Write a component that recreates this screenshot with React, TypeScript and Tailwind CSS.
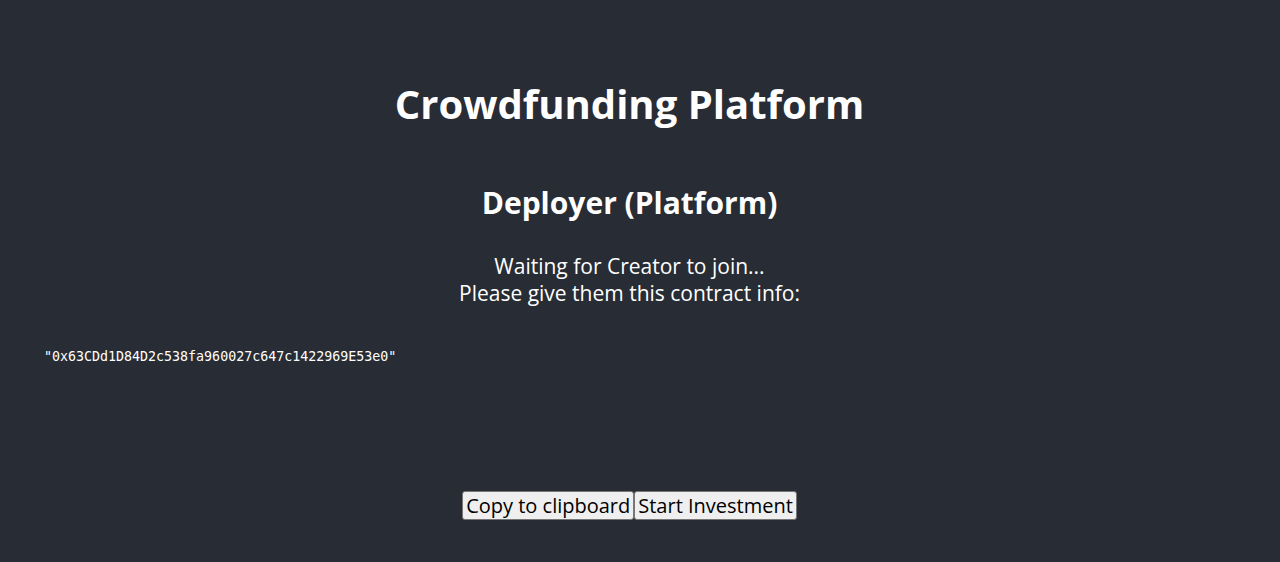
import React from "react";

const address = "0x63CDd1D84D2c538fa960027c647c1422969E53e0";

export default function App() {
  return (
    <div className="min-h-[562px] bg-[#282c34] text-white font-['Open_Sans',sans-serif] flex flex-col pr-[21px]">
      {/* Header */}
      <h1 className="text-center text-[40px] font-bold leading-none mt-[84px]">
        Crowdfunding Platform
      </h1>

      <h2 className="text-center text-[30px] font-bold leading-none mt-[64px]">
        Deployer (Platform)
      </h2>

      <p className="text-center text-[21px] leading-[27px] mt-[35px]">
        Waiting for Creator to join...
        <br />
        Please give them this contract info:
      </p>

      <pre className="font-['DejaVu_Sans_Mono',monospace] text-[13.3px] leading-none ml-[44px] mt-[43px]">
        "{address}"
      </pre>

      {/* Actions */}
      <div className="flex justify-center mt-[128px]">
        <button className="bg-[#efefef] text-black text-[20px] leading-none px-[3px] h-[29px] rounded-[3px] border border-[#767676] font-['Open_Sans',sans-serif]">
          Copy to clipboard
        </button>
        <button className="bg-[#efefef] text-black text-[20px] leading-none px-[3px] h-[29px] rounded-[3px] border border-[#767676] font-['Open_Sans',sans-serif]">
          Start Investment
        </button>
      </div>
    </div>
  );
}
